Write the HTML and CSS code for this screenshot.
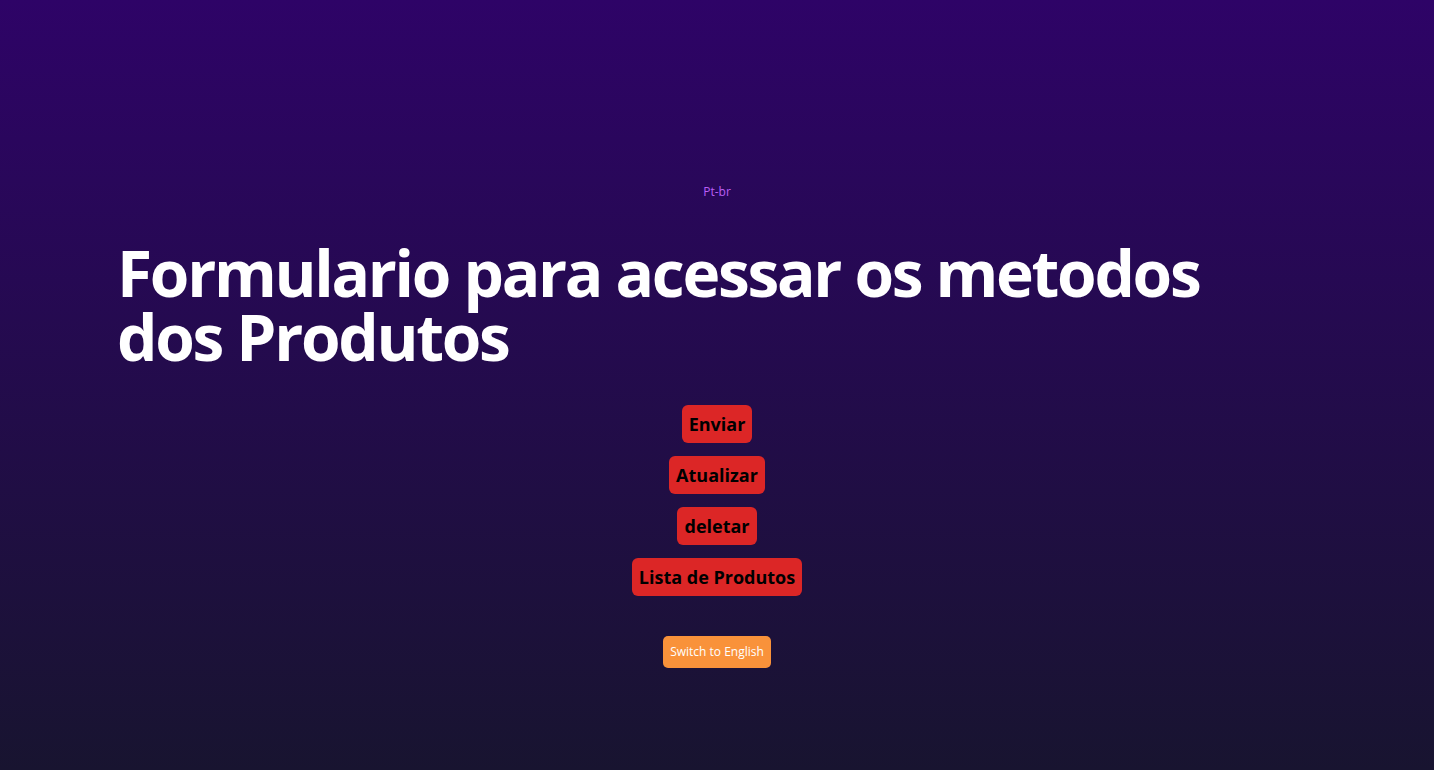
FILE: index.html
```html
<!DOCTYPE html>
<html lang="pt-br">
<head>
<meta charset="utf-8">
<title>Formulario</title>
<link rel="stylesheet" href="styles.css">
</head>
<body>
<main class="page">
  <p class="lang">Pt-br</p>
  <h1 class="title">Formulario para acessar os metodos dos Produtos</h1>
  <div class="actions">
    <button class="btn">Enviar</button>
    <button class="btn">Atualizar</button>
    <button class="btn">deletar</button>
    <button class="btn">Lista de Produtos</button>
  </div>
  <button class="switch">Switch to English</button>
</main>
</body>
</html>
```
FILE: styles.css
```css
html, body {
  margin: 0;
  padding: 0;
}
body {
  min-height: 100vh;
  background: linear-gradient(to bottom, #2e0367 0%, #181430 100%);
  font-family: "Open Sans", "Noto Sans", sans-serif;
  color: #fff;
}
.page {
  max-width: 1200px;
  margin: 0 auto;
  padding-top: 182px;
  display: flex;
  flex-direction: column;
  align-items: center;
}
.lang {
  margin: 0;
  font-size: 12px;
  line-height: 20px;
  color: #bb5ff7;
}
.title {
  align-self: stretch;
  margin: 39px 0 36px;
  font-size: 64px;
  line-height: 64px;
  font-weight: 700;
  color: #fff;
  letter-spacing: -2.3px;
}
.actions {
  display: flex;
  flex-direction: column;
  align-items: center;
  gap: 13px;
}
.btn {
  font-family: inherit;
  font-size: 18px;
  font-weight: 700;
  line-height: 28px;
  padding: 5px 7px;
  border: 0;
  border-radius: 6px;
  background: #dc2626;
  color: #000;
}
.switch {
  margin-top: 40px;
  font-family: inherit;
  font-size: 12px;
  line-height: 20px;
  height: 32px;
  padding: 6px 7px;
  border: 0;
  border-radius: 5px;
  background: #f9923a;
  color: #fff;
}
```
